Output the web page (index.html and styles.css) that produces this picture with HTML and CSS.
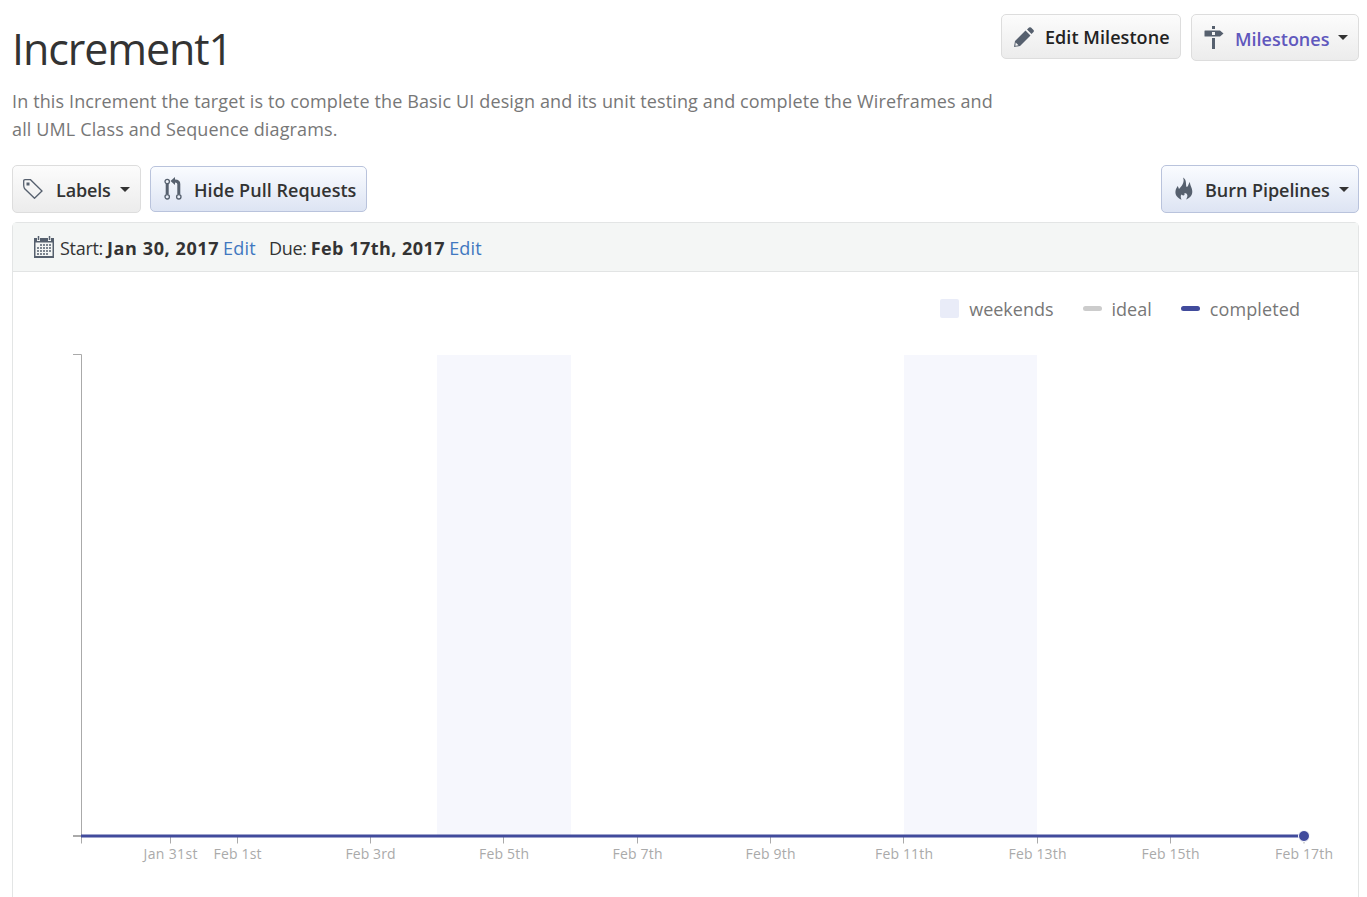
FILE: index.html
```html
<!DOCTYPE html>
<html lang="en">
<head>
<meta charset="utf-8">
<title>Increment1</title>
<link rel="stylesheet" href="styles.css">
</head>
<body>
<main class="page">
  <header class="header">
    <div class="intro">
      <h1 class="title">Increment1</h1>
      <p class="description">In this Increment the target is to complete the Basic UI design and its unit testing and complete the Wireframes and<br>all UML Class and Sequence diagrams.</p>
    </div>
    <div class="actions">
      <button class="btn btn-edit">
        <svg class="icon" width="22" height="22" viewBox="0 0 22 22"><path d="M1 21 2 15 12.5 4.5 17.5 9.5 7 20ZM14 3.500 16 1.500Q17 .8 18 1.500L20.500 4Q21.300 5 20.500 6L18.500 8Z"/><path class="cut" d="M2.700 16.500 5.500 19.300 2.300 19.800Z"/></svg>
        <span class="label">Edit Milestone</span>
      </button>
      <button class="btn btn-milestones">
        <svg class="icon" width="20" height="24" viewBox="0 0 20 24"><path d="M8 0H11V3H8ZM1 4.500H16L19.500 7.500 16 10.500H1Q.5 10.500 .5 10V5Q.5 4.500 1 4.500ZM8 12H11V23H8Z"/><path class="cut" d="M8 6H11V9H8Z"/></svg>
        <span class="label">Milestones</span><i class="caret"></i>
      </button>
    </div>
  </header>
  <nav class="toolbar">
    <button class="btn btn-labels">
      <svg class="icon line" width="20" height="20" viewBox="0 0 20 20"><path d="M.7 6V2Q.7.700 2 .7H7.500L19 12 11.500 19.300 1.500 9.500Q.7 8 .7 6Z"/><rect class="solid" x="3.500" y="3.500" width="3" height="3"/></svg>
      <span class="label">Labels</span><i class="caret"></i>
    </button>
    <button class="btn blue btn-pulls">
      <svg class="icon line" width="18" height="24" viewBox="0 0 18 24"><circle cx="3.200" cy="4.500" r="2.200"/><circle cx="3.200" cy="19.800" r="2.200"/><circle cx="14.800" cy="19.800" r="2.200"/><path class="thick" d="M3.200 7V17.300M14.800 17.300V7Q14.800 4 11 4H10"/><path class="solid" d="M6.500 4 11 0V8Z"/></svg>
      <span class="label">Hide Pull Requests</span>
    </button>
    <button class="btn blue btn-burn">
      <svg class="icon" width="18" height="24" viewBox="0 0 18 24"><path d="M8 .5C12 3 10.500 7 11.500 10 13.500 10 13 7 15 5 14.500 7.500 17.500 11 17.300 15 17 19 14.500 21 11 22.500 13.500 19 12.500 16 9.500 16 10 19 8 19 6.500 17.500 5 19 6 21 6.500 22.800 2 20.500 0 18 .5 14 .7 12 2 10.500 2.500 9 3.500 10 3.500 11 4 12 7 9 10 5 8 .5Z"/></svg>
      <span class="label">Burn Pipelines</span><i class="caret"></i>
    </button>
  </nav>
  <section class="panel">
    <div class="dates">
      <svg class="icon calendar" width="20" height="22" viewBox="0 0 20 22"><path d="M0 2H3V5H6V2H14V5H17V2H20V22H0Z"/><path class="paper" d="M1.500 6.500H18.500V20H1.500Z"/><path class="grid" d="M6 9H17M3 12H17M3 15H17M3 18H14"/><path class="ring" d="M4.500 0V4M15.500 0V4"/></svg>
      <span class="date-label start">Start:</span><b class="date start-date">Jan 30, 2017</b><a class="edit">Edit</a>
      <span class="date-label due">Due:</span><b class="date due-date">Feb 17th, 2017</b><a class="edit">Edit</a>
    </div>
    <div class="legend">
      <span class="item"><i class="swatch weekend"></i><span class="name n1">weekends</span></span>
      <span class="item"><i class="swatch ideal"></i><span class="name n2">ideal</span></span>
      <span class="item"><i class="swatch completed"></i><span class="name n3">completed</span></span>
    </div>
    <svg class="chart" width="1345" height="570" viewBox="13 327 1345 570">
      <path class="weekend-band" d="M437 355H571V836H437ZM904 355H1037V836H904Z"/>
      <path class="axis" d="M73 354.500H81.500V843.500M170.500 836V843.500M237.500 836V843.500M370.500 836V843.500M503.500 836V843.500M637.500 836V843.500M770.500 836V843.500M903.500 836V843.500M1037.500 836V843.500M1170.500 836V843.500M1304 836V843.500"/>
      <path class="axis zero" d="M73 836H82"/>
      <path class="progress" d="M81 836H1304"/>
      <circle class="point" cx="1304" cy="836" r="5.500"/>
      <g class="ticks">
        <text x="170.500" y="859" textLength="54">Jan 31st</text>
        <text x="237.500" y="859" textLength="48">Feb 1st</text>
        <text x="370.500" y="859" textLength="50">Feb 3rd</text>
        <text x="504" y="859" textLength="50">Feb 5th</text>
        <text x="637.500" y="859" textLength="50">Feb 7th</text>
        <text x="770.500" y="859" textLength="50">Feb 9th</text>
        <text x="904" y="859" textLength="58">Feb 11th</text>
        <text x="1037.500" y="859" textLength="58">Feb 13th</text>
        <text x="1170.500" y="859" textLength="58">Feb 15th</text>
        <text x="1304" y="859" textLength="58">Feb 17th</text>
      </g>
    </svg>
  </section>
</main>
</body>
</html>
```
FILE: styles.css
```css
* { box-sizing: border-box; }
body { margin: 0; height: 897px; overflow: hidden; background: #fff; color: #333; font: 18px/28px "Open Sans", "Noto Sans", sans-serif; }
.page { padding: 14px 8px 0 12px; }
.header { display: flex; justify-content: space-between; height: 151px; }
.intro { flex: none; width: 985px; white-space: nowrap; }
.title { margin: 7px 0 0; font-size: 43px; font-weight: 400; line-height: 56px; letter-spacing: -1.1px; }
.description { margin: 10px 0 0; color: #777; letter-spacing: .13px; }
.actions { display: flex; align-items: flex-start; gap: 10px; }
.btn { display: flex; align-items: center; flex: none; margin: 0; border: 1px solid #ddd; border-radius: 5px; padding: 0 0 0 11px; background: linear-gradient(#fcfcfc, #ececec); color: #333; font: 600 18px/28px "Open Sans", "Noto Sans", sans-serif; white-space: nowrap; }
.blue { border-color: #b9c3dc; background: linear-gradient(#fafcff, #dde4f3); }
.icon { flex: none; fill: #56606e; }
.cut { fill: #f5f5f5; }
.line { fill: none; stroke: #56606e; stroke-width: 1.300; }
.thick { stroke-width: 3; }
.solid { fill: #56606e; stroke: none; }
.caret { width: 0; height: 0; margin-left: 9px; border: 5px solid transparent; border-top-color: #333; border-bottom: 0; }
.btn-edit { width: 180px; height: 45px; color: #222; }
.btn-edit .label { margin-left: 10px; letter-spacing: .06px; }
.btn-milestones { width: 168px; height: 47px; padding-left: 12px; color: #6058bd; }
.btn-milestones .label { margin: 2px 0 0 11px; }
.toolbar { display: flex; align-items: flex-start; gap: 9px; height: 57px; }
.btn-labels { width: 129px; height: 48px; padding-left: 10px; }
.btn-labels .label { margin: 2px 0 0 13px; letter-spacing: -.15px; }
.btn-pulls { width: 217px; height: 46px; margin-top: 1px; padding-left: 13px; }
.btn-pulls .label { margin: 2px 0 0 12px; letter-spacing: .05px; }
.btn-burn { width: 198px; height: 48px; margin-left: auto; padding-left: 13px; }
.btn-burn .label { margin: 2px 0 0 12px; letter-spacing: -.05px; }
.panel { height: 690px; border: 1px solid #e3e5e5; border-radius: 5px 5px 0 0; }
.dates { display: flex; align-items: center; height: 49px; border-bottom: 1px solid #e2e4e4; padding: 2px 0 0 21px; background: #f4f6f5; white-space: nowrap; }
.calendar { margin-bottom: 3px; }
.paper { fill: #f4f6f5; }
.grid { fill: none; stroke: #56606e; stroke-width: 1.700; stroke-dasharray: 2 1; }
.ring { stroke: #56606e; stroke-width: 1.500; }
.date-label { margin-left: 6px; letter-spacing: -.3px; }
.due { margin-left: 13px; }
.date { margin: 0 4px; }
.start-date { letter-spacing: .6px; }
.due-date { letter-spacing: .48px; }
.edit { color: #4078c0; letter-spacing: .2px; }
.legend { display: flex; justify-content: flex-end; align-items: center; gap: 29px; height: 55px; padding: 18px 58px 0 0; color: #777; }
.n3 { letter-spacing: .1px; }
.item { display: flex; align-items: center; }
.swatch { width: 19px; height: 5px; margin-right: 10px; border-radius: 3px; }
.weekend { height: 19px; background: #e9ecf8; border-radius: 2px; }
.ideal { background: #ccc; }
.completed { background: #414b9c; }
.chart { display: block; }
.weekend-band { fill: #f6f7fd; }
.axis { fill: none; stroke: #aaa; }
.zero { stroke-width: 2; }
.progress { stroke: #414b9c; stroke-width: 3; }
.point { fill: #414b9c; stroke: #fff; stroke-width: 1; }
.ticks { fill: #aaa; font-size: 14px; text-anchor: middle; }
```
